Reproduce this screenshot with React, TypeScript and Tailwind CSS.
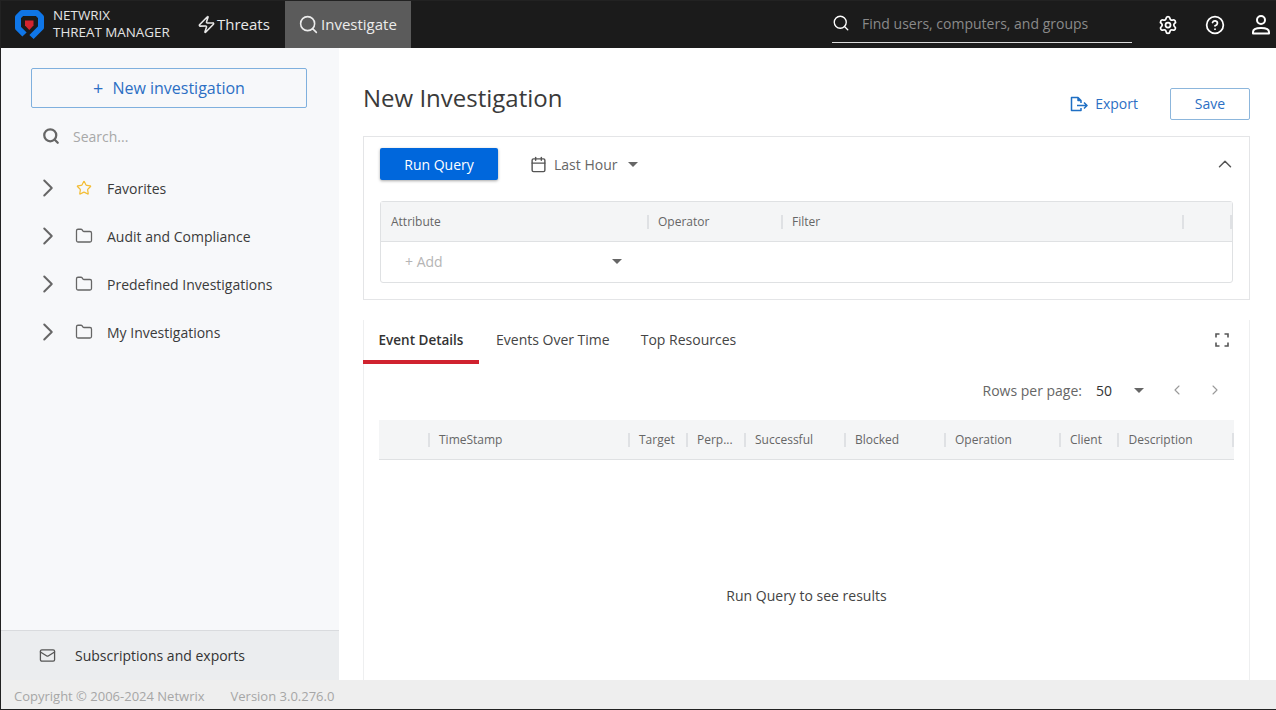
import { Calendar, ChevronLeft, ChevronRight, ChevronUp, CircleHelp, Folder, Mail, Search, Settings, Star, Zap } from "lucide-react";

const tree = [
  { label: "Favorites", star: true },
  { label: "Audit and Compliance" },
  { label: "Predefined Investigations" },
  { label: "My Investigations" },
];

const columns = [
  { label: "TimeStamp", w: "w-[200px]" },
  { label: "Target", w: "w-[58px]" },
  { label: "Perp...", w: "w-[58px]" },
  { label: "Successful", w: "w-[100px]" },
  { label: "Blocked", w: "w-[100px]" },
  { label: "Operation", w: "w-[115px]" },
  { label: "Client", w: "w-[58px]" },
  { label: "Description", w: "w-[115px]" },
];

const Caret = ({ className = "" }: { className?: string }) => (
  <span className={`inline-block w-0 h-0 border-x-[5px] border-x-transparent border-t-[5px] border-t-[#666] ${className}`} />
);

const Sep = () => <span className="block w-[2px] h-[14px] bg-[#dfe1e4] shrink-0" />;

const Logo = () => (
  <svg width="29" height="30" viewBox="0 0 29 30" className="shrink-0">
    <path d="M9.500 24.500L3 18V7L7 3H22L26 7V17.500L16.500 27" fill="none" stroke="#0f76e8" strokeWidth="6" strokeLinejoin="round" />
    <path d="M10 10.500h8.500v5l-4.250 4.500L10 15.500z" fill="#d3242f" />
  </svg>
);

const Header = () => (
  <header className="h-[47px] bg-[#1b1b1b] flex items-center shrink-0 text-white">
    <div className="w-[184px] flex items-center pl-[14px] gap-[9px] shrink-0">
      <Logo />
      <div className="text-[13.400px] leading-[17px] text-[#e4e4e4] whitespace-nowrap -mt-[1px]">
        <div>NETWRIX</div>
        <div>THREAT MANAGER</div>
      </div>
    </div>
    <div className="w-[100px] flex items-center pl-[12px] gap-[1px] h-full text-[#e8e8e8] text-[15px]">
      <Zap size={19} strokeWidth={2} />
      <span>Threats</span>
    </div>
    <div className="w-[126px] h-full flex items-center pl-[13px] gap-[2px] bg-[#5b5b5b] text-[#ececec] text-[15px]">
      <Search size={21} strokeWidth={1.8} />
      <span>Investigate</span>
    </div>
    <div className="ml-auto mr-[26px] w-[300px] h-[41px] -mt-[5px] border-b border-[#dcdcdc] flex items-center gap-[12px] pt-[3px]">
      <Search size={18} strokeWidth={1.8} />
      <span className="text-[14px] text-[#8a8a8a] whitespace-nowrap">Find users, computers, and groups</span>
    </div>
    <div className="flex items-center gap-[27px] pr-[5px]">
      <Settings size={20} strokeWidth={2.1} />
      <CircleHelp size={20} strokeWidth={2.1} />
      <svg width="20" height="22" viewBox="0 0 20 22" fill="none" stroke="white" strokeWidth="2" className="-ml-[1px]">
        <circle cx="10" cy="6" r="4" />
        <path d="M2 19.500v-1.500c0-2.500 3-4 8-4s8 1.500 8 4v1.500z" strokeLinejoin="round" />
      </svg>
    </div>
  </header>
);

const Sidebar = () => (
  <aside className="w-[338px] shrink-0 bg-[#f7f8fa] flex flex-col">
    <div className="flex-1 pt-[20px] px-[30px]">
      <button className="w-[276px] h-[40px] rounded-[2px] border border-[#7fb0de] bg-transparent text-[#2c6fc4] text-[16px] flex items-center justify-center gap-[9px]">
        <span className="text-[18px] leading-none">+</span>
        <span>New investigation</span>
      </button>
      <div className="mt-[17px] h-[22px] flex items-center pl-[11px] gap-[13px]">
        <Search size={18} strokeWidth={3} className="text-[#666]" />
        <span className="text-[14px] text-[#a8a8a8]">Search...</span>
      </div>
      <div className="mt-[17px] pl-[10px]">
        {tree.map((item) => (
          <div key={item.label} className="h-[48px] flex items-center">
            <ChevronRight size={30} strokeWidth={1.6} className="text-[#666] -ml-[8px] -mr-[5px] shrink-0" />
            <div className="ml-[17px] w-[32px]">
              {item.star ? (
                <Star size={16} strokeWidth={1.8} className="text-[#f3bd35] ml-[1px]" />
              ) : (
                <Folder size={18} strokeWidth={1.7} className="text-[#666]" />
              )}
            </div>
            <span className="text-[14px] text-[#3b3b3b] whitespace-nowrap">{item.label}</span>
          </div>
        ))}
      </div>
    </div>
    <div className="h-[50px] bg-[#ebedef] border-t border-[#d9dbde] flex items-center pl-[38px] gap-[19px]">
      <Mail size={17} strokeWidth={1.8} className="text-[#555]" />
      <span className="text-[14px] text-[#333]">Subscriptions and exports</span>
    </div>
  </aside>
);

const QueryPanel = () => (
  <section className="mt-[16px] w-[887px] h-[164px] border border-[#e4e5e7] px-[16px] pt-[11px]">
    <div className="flex items-center h-[32px]">
      <button className="w-[118px] h-[32px] rounded-[2px] bg-[#0067dc] text-white text-[14px] shadow-[0_1px_3px_rgba(0,0,0,0.35)]">
        Run Query
      </button>
      <Calendar size={17} strokeWidth={2} className="ml-[32px] text-[#555]" />
      <span className="ml-[7px] text-[14px] text-[#666]">Last Hour</span>
      <Caret className="ml-[11px]" />
      <ChevronUp size={22} strokeWidth={1.6} className="ml-auto -mr-[3px] text-[#555]" />
    </div>
    <div className="mt-[21px] h-[82px] rounded-[3px] border border-[#dfe1e3]">
      <div className="h-[40px] bg-[#f4f5f6] border-b border-[#dfe1e3] flex items-center text-[12px] text-[#666]">
        <span className="w-[266px] pl-[10px] shrink-0">Attribute</span>
        <Sep />
        <span className="w-[132px] pl-[9px] shrink-0">Operator</span>
        <Sep />
        <span className="w-[399px] pl-[9px] shrink-0">Filter</span>
        <Sep />
        <span className="ml-[46px]"><Sep /></span>
      </div>
      <div className="h-[40px] flex items-center pl-[24px] pb-[1px]">
        <span className="text-[14px] text-[#b5b5b5]">+ Add</span>
        <Caret className="ml-[169px]" />
      </div>
    </div>
  </section>
);

const Results = () => (
  <section className="mt-[20px] w-[887px] flex-1 border-x border-[#eeeff0] flex flex-col min-h-0">
    <div className="h-[44px] flex items-stretch text-[14px] text-[#444] -ml-[1px]">
      <div className="w-[116px] flex items-center justify-center font-semibold border-b-[4px] border-[#d0222f] text-[#333] text-[13.500px]">
        Event Details
      </div>
      <div className="ml-[17px] flex items-center pb-[4px] -mt-[1px]">Events Over Time</div>
      <div className="ml-[31px] flex items-center pb-[4px] -mt-[1px]">Top Resources</div>
      <svg width="14" height="14" viewBox="0 0 14 14" fill="none" stroke="#555" strokeWidth="1.600" className="ml-auto mr-[20px] mt-[13px]">
        <path d="M1 4.500V1h3.500M9.500 1H13v3.500M13 9.500V13H9.500M4.500 13H1V9.500" />
      </svg>
    </div>
    <div className="mt-[14px] h-[24px] flex items-center justify-end pr-[26px]">
      <span className="text-[14px] text-[#666]">Rows per page:</span>
      <span className="ml-[14px] text-[14px] text-[#333] pt-[1px]">50</span>
      <Caret className="ml-[22px] mt-[1px]" />
      <ChevronLeft size={16} strokeWidth={1.6} className="ml-[25px] text-[#999]" />
      <ChevronRight size={16} strokeWidth={1.6} className="ml-[22px] text-[#999]" />
    </div>
    <div className="mt-[18px] ml-[15px] w-[855px] h-[40px] bg-[#f4f5f6] border-b border-[#dfe1e3] flex items-center text-[12px] text-[#666]">
      <span className="w-[49px] shrink-0" />
      {columns.map((c, i) => (
        <div key={c.label} className={`${c.w} flex items-center shrink-0`}>
          <Sep />
          <span className={i === 7 ? "pl-[9.500px] whitespace-nowrap" : "pl-[9px] whitespace-nowrap"}>{c.label}</span>
        </div>
      ))}
      <span className="ml-auto"><Sep /></span>
    </div>
    <div className="flex-1 flex items-center justify-center pt-[50px] text-[14px] text-[#444]">Run Query to see results</div>
  </section>
);

const App = () => (
  <div className="w-[1276px] h-[710px] overflow-hidden bg-white flex flex-col border-y border-l border-[#222] font-['Open_Sans',sans-serif]">
    <Header />
    <div className="flex-1 flex min-h-0">
      <Sidebar />
      <main className="flex-1 pl-[24px] flex flex-col min-w-0">
        <div className="h-[88px] flex items-center justify-between w-[887px] shrink-0 pt-[12px] -mb-[16px]">
          <h1 className="text-[24px] text-[#3a3a3a]">New Investigation</h1>
          <div className="flex items-center mt-[11px]">
            <svg width="18" height="16" viewBox="0 0 18 16" fill="none" stroke="#1f6fc4" strokeWidth="1.500" strokeLinejoin="round" className="mr-[7px]">
              <path d="M11 12v2.500H1.500v-13H8L11 4.500V7M8 1.500v3h3M7 9.500h10M14 6.500l3 3-3 3" />
            </svg>
            <span className="text-[14px] text-[#2c6fc4]">Export</span>
            <button className="ml-[32px] w-[80px] h-[32px] rounded-[2px] border border-[#8cb6dc] text-[14px] text-[#2c6fc4]">Save</button>
          </div>
        </div>
        <QueryPanel />
        <Results />
      </main>
    </div>
    <footer className="h-[29px] shrink-0 bg-[#eeeeee] flex items-center pl-[13px] pt-[4px] gap-[26px] text-[13px] text-[#a6a6a6]">
      <span>Copyright © 2006-2024 Netwrix</span>
      <span>Version 3.0.276.0</span>
    </footer>
  </div>
);

export default App;
